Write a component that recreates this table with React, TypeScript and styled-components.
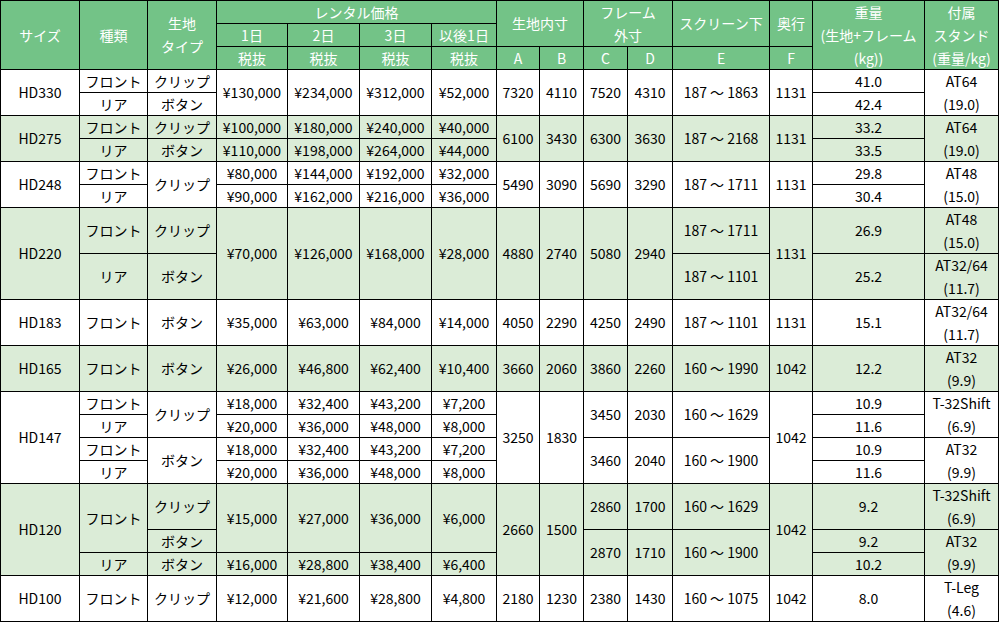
import { FC } from "react";
import styled, { createGlobalStyle } from "styled-components";

const GlobalStyle = createGlobalStyle`
  body {
    margin: 0;
    background: #ffffff;
    font-family: "Noto Sans CJK JP", "Noto Sans", sans-serif;
  }
`;

const colors = {
  head: "#73c387",
  shade: "#dbecd7",
  line: "#000000",
  text: "#000000",
};

const widths = [79, 68, 69, 71, 72, 72, 65, 43, 44, 44, 45, 97, 43, 112, 74];

// spreadsheet grid: every row track is 23px, cells span rows/cols like a table
const Sheet = styled.div`
  display: grid;
  grid-template-columns: ${widths.map((w) => `${w}px`).join(" ")};
  grid-auto-rows: 23px;
  width: max-content;
  border-left: 1px solid ${colors.line};
  border-top: 1px solid ${colors.line};
  font-size: 14px;
  font-weight: 400;
  color: ${colors.text};
`;

const CellBox = styled.div<{ $r: number; $c: number }>`
  grid-row: span ${({ $r }) => $r};
  grid-column: span ${({ $c }) => $c};
  display: flex;
  align-items: center;
  justify-content: center;
  box-sizing: border-box;
  border-right: 1px solid ${colors.line};
  border-bottom: 1px solid ${colors.line};
  line-height: 23px;
  text-align: center;
  white-space: pre-line;
`;

const HeadCell = styled(CellBox)`
  background: ${colors.head};
  color: #ffffff;
`;

const BodyCell = styled(CellBox)<{ $shade: boolean }>`
  background: ${({ $shade }) => ($shade ? colors.shade : "#ffffff")};
`;

type Cell = { v: string; r?: number; c?: number };

const c = (v: string, r = 1, cs = 1): Cell => ({ v, r, c: cs });

const head: Cell[] = [
  c("サイズ", 3),
  c("種類", 3),
  c("生地\nタイプ", 3),
  c("レンタル価格", 1, 4),
  c("生地内寸", 2, 2),
  c("フレーム\n外寸", 2, 2),
  c("スクリーン下", 2),
  c("奥行", 2),
  c("重量\n(生地+フレーム\n(kg))", 3),
  c("付属\nスタンド\n(重量/kg)", 3),
  c("1日"),
  c("2日"),
  c("3日"),
  c("以後1日"),
  c("税抜"),
  c("税抜"),
  c("税抜"),
  c("税抜"),
  c("A"),
  c("B"),
  c("C"),
  c("D"),
  c("E"),
  c("F"),
];

// one block = one model, cells listed in table order
const blocks: { shade: boolean; cells: Cell[] }[] = [
  {
    shade: false,
    cells: [
      c("HD330", 2), c("フロント"), c("クリップ"), c("¥130,000", 2), c("¥234,000", 2), c("¥312,000", 2), c("¥52,000", 2), c("7320", 2), c("4110", 2), c("7520", 2), c("4310", 2), c("187 ～ 1863", 2), c("1131", 2), c("41.0"), c("AT64\n(19.0)", 2),
      c("リア"), c("ボタン"), c("42.4"),
    ],
  },
  {
    shade: true,
    cells: [
      c("HD275", 2), c("フロント"), c("クリップ"), c("¥100,000"), c("¥180,000"), c("¥240,000"), c("¥40,000"), c("6100", 2), c("3430", 2), c("6300", 2), c("3630", 2), c("187 ～ 2168", 2), c("1131", 2), c("33.2"), c("AT64\n(19.0)", 2),
      c("リア"), c("ボタン"), c("¥110,000"), c("¥198,000"), c("¥264,000"), c("¥44,000"), c("33.5"),
    ],
  },
  {
    shade: false,
    cells: [
      c("HD248", 2), c("フロント"), c("クリップ", 2), c("¥80,000"), c("¥144,000"), c("¥192,000"), c("¥32,000"), c("5490", 2), c("3090", 2), c("5690", 2), c("3290", 2), c("187 ～ 1711", 2), c("1131", 2), c("29.8"), c("AT48\n(15.0)", 2),
      c("リア"), c("¥90,000"), c("¥162,000"), c("¥216,000"), c("¥36,000"), c("30.4"),
    ],
  },
  {
    shade: true,
    cells: [
      c("HD220", 4), c("フロント", 2), c("クリップ", 2), c("¥70,000", 4), c("¥126,000", 4), c("¥168,000", 4), c("¥28,000", 4), c("4880", 4), c("2740", 4), c("5080", 4), c("2940", 4), c("187 ～ 1711", 2), c("1131", 4), c("26.9", 2), c("AT48\n(15.0)", 2),
      c("リア", 2), c("ボタン", 2), c("187 ～ 1101", 2), c("25.2", 2), c("AT32/64\n(11.7)", 2),
    ],
  },
  {
    shade: false,
    cells: [
      c("HD183", 2), c("フロント", 2), c("ボタン", 2), c("¥35,000", 2), c("¥63,000", 2), c("¥84,000", 2), c("¥14,000", 2), c("4050", 2), c("2290", 2), c("4250", 2), c("2490", 2), c("187 ～ 1101", 2), c("1131", 2), c("15.1", 2), c("AT32/64\n(11.7)", 2),
    ],
  },
  {
    shade: true,
    cells: [
      c("HD165", 2), c("フロント", 2), c("ボタン", 2), c("¥26,000", 2), c("¥46,800", 2), c("¥62,400", 2), c("¥10,400", 2), c("3660", 2), c("2060", 2), c("3860", 2), c("2260", 2), c("160 ～ 1990", 2), c("1042", 2), c("12.2", 2), c("AT32\n(9.9)", 2),
    ],
  },
  {
    shade: false,
    cells: [
      c("HD147", 4), c("フロント"), c("クリップ", 2), c("¥18,000"), c("¥32,400"), c("¥43,200"), c("¥7,200"), c("3250", 4), c("1830", 4), c("3450", 2), c("2030", 2), c("160 ～ 1629", 2), c("1042", 4), c("10.9"), c("T-32Shift\n(6.9)", 2),
      c("リア"), c("¥20,000"), c("¥36,000"), c("¥48,000"), c("¥8,000"), c("11.6"),
      c("フロント"), c("ボタン", 2), c("¥18,000"), c("¥32,400"), c("¥43,200"), c("¥7,200"), c("3460", 2), c("2040", 2), c("160 ～ 1900", 2), c("10.9"), c("AT32\n(9.9)", 2),
      c("リア"), c("¥20,000"), c("¥36,000"), c("¥48,000"), c("¥8,000"), c("11.6"),
    ],
  },
  {
    shade: true,
    cells: [
      c("HD120", 4), c("フロント", 3), c("クリップ", 2), c("¥15,000", 3), c("¥27,000", 3), c("¥36,000", 3), c("¥6,000", 3), c("2660", 4), c("1500", 4), c("2860", 2), c("1700", 2), c("160 ～ 1629", 2), c("1042", 4), c("9.2", 2), c("T-32Shift\n(6.9)", 2),
      c("ボタン"), c("2870", 2), c("1710", 2), c("160 ～ 1900", 2), c("9.2"), c("AT32\n(9.9)", 2),
      c("リア"), c("ボタン"), c("¥16,000"), c("¥28,800"), c("¥38,400"), c("¥6,400"), c("10.2"),
    ],
  },
  {
    shade: false,
    cells: [
      c("HD100", 2), c("フロント", 2), c("クリップ", 2), c("¥12,000", 2), c("¥21,600", 2), c("¥28,800", 2), c("¥4,800", 2), c("2180", 2), c("1230", 2), c("2380", 2), c("1430", 2), c("160 ～ 1075", 2), c("1042", 2), c("8.0", 2), c("T-Leg\n(4.6)", 2),
    ],
  },
];

const App: FC = () => {
  return (
    <>
      <GlobalStyle />
      <Sheet>
        {head.map((cell, i) => (
          <HeadCell key={`h-${i}`} $r={cell.r ?? 1} $c={cell.c ?? 1}>
            {cell.v}
          </HeadCell>
        ))}
        {blocks.map((b, bi) =>
          b.cells.map((cell, ci) => (
            <BodyCell key={`${bi}-${ci}`} $r={cell.r ?? 1} $c={cell.c ?? 1} $shade={b.shade}>
              {cell.v}
            </BodyCell>
          ))
        )}
      </Sheet>
    </>
  );
};

export default App;
